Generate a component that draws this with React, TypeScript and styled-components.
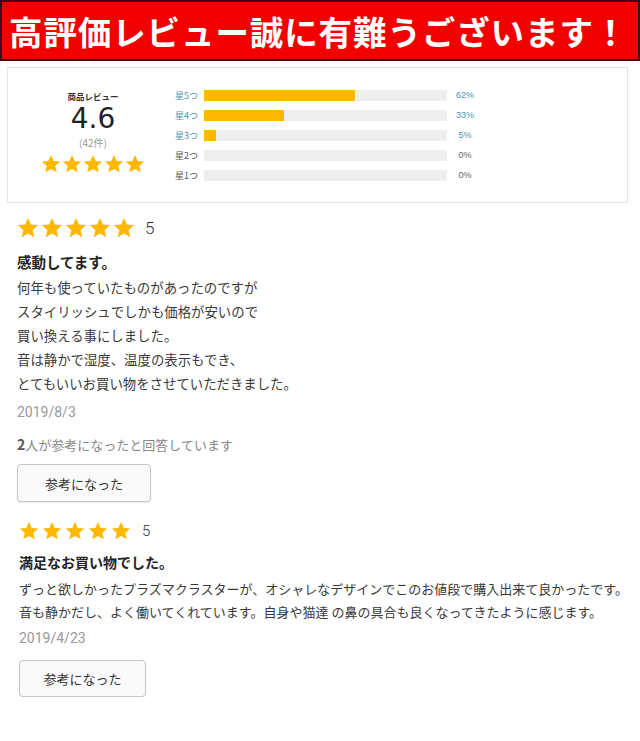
import React from "react";
import styled, { createGlobalStyle } from "styled-components";

const GlobalStyle = createGlobalStyle`
  html, body {
    margin: 0;
    padding: 0;
    background: #fff;
  }
  body {
    font-family: "Noto Sans CJK JP", "Noto Sans", sans-serif;
    color: #333;
  }
`;

const Page = styled.div`
  width: 640px;
`;

const Banner = styled.div`
  height: 57px;
  background: #f20000;
  border: 2px solid #3a0c0c;
  display: flex;
  align-items: center;
  padding-left: 7px;
  color: #fff;
  font-size: 33.5px;
  font-weight: 700;
  letter-spacing: 0.9px;
  white-space: nowrap;
  overflow: hidden;
`;

const Summary = styled.div`
  margin: 6px 12px 0 7px;
  border: 1px solid #e3e3e3;
  padding: 17px 0 17px 5px;
  display: flex;
  align-items: center;
  gap: 2px;
`;

const Overall = styled.div`
  width: 160px;
  margin-bottom: 6px;
  display: flex;
  flex-direction: column;
  align-items: center;
`;

const OverallLabel = styled.div`
  font-size: 8.5px;
  font-weight: 700;
  color: #333;
  line-height: 12px;
`;

const Score = styled.div`
  font-family: "DejaVu Sans", "Liberation Sans", sans-serif;
  font-size: 28px;
  line-height: 28px;
  color: #222;
  margin-top: 3px;
`;

const Count = styled.div`
  font-size: 10px;
  line-height: 12px;
  color: #999;
  margin-top: 4px;
`;

const OverallStars = styled.div`
  margin-top: 5px;
`;

const Bars = styled.div`
  display: flex;
  flex-direction: column;
`;

const BarRow = styled.div`
  height: 20px;
  display: flex;
  align-items: center;
  font-size: 9px;
`;

const BarLabel = styled.span<{ $active: boolean }>`
  width: 29px;
  color: ${(p) => (p.$active ? "#4a97ad" : "#555")};
`;

const Track = styled.div`
  width: 243px;
  height: 11px;
  background: #eee;
`;

const Fill = styled.div`
  height: 100%;
  background: #ffb800;
`;

const Percent = styled.span<{ $active: boolean }>`
  width: 28px;
  margin-left: 4px;
  text-align: center;
  font-family: "Liberation Sans", Arial, sans-serif;
  color: ${(p) => (p.$active ? "#4a97ad" : "#666")};
`;

const Review = styled.div<{ $compact?: boolean }>`
  padding-left: ${(p) => (p.$compact ? 19 : 17)}px;
  margin-top: ${(p) => (p.$compact ? 19 : 14)}px;
`;

const StarRow = styled.div<{ $size: number }>`
  display: flex;
  align-items: center;
  height: ${(p) => p.$size}px;
  gap: 2px;
`;

const StarValue = styled.span<{ $size: number }>`
  margin-left: 8px;
  font-family: "Roboto", "Liberation Sans", sans-serif;
  font-weight: 300;
  font-size: ${(p) => p.$size}px;
  color: #333;
`;

const ReviewTitle = styled.div<{ $compact?: boolean }>`
  font-weight: 700;
  color: #222;
  font-size: ${(p) => (p.$compact ? 14 : 14.5)}px;
  line-height: ${(p) => (p.$compact ? 20 : 22)}px;
  margin-top: ${(p) => (p.$compact ? 11 : 12)}px;
`;

const Body = styled.div<{ $compact?: boolean }>`
  font-size: ${(p) => (p.$compact ? 13 : 13.4)}px;
  line-height: ${(p) => (p.$compact ? 23 : 24)}px;
  margin-top: ${(p) => (p.$compact ? 4.5 : 2)}px;
  color: #3a3a3a;
  white-space: nowrap;
`;

const DateLine = styled.div<{ $compact?: boolean }>`
  font-family: "Roboto", "Liberation Sans", sans-serif;
  font-size: 14px;
  line-height: 20px;
  color: #999;
  margin-top: ${(p) => (p.$compact ? 5.5 : 7)}px;
`;

const Helpful = styled.div`
  font-size: 13px;
  line-height: 20px;
  color: #888;
  margin-top: 12px;
  b {
    color: #555;
    font-size: 14px;
  }
`;

const HelpButton = styled.button<{ $compact?: boolean }>`
  display: flex;
  align-items: center;
  justify-content: center;
  width: ${(p) => (p.$compact ? 127 : 134)}px;
  height: ${(p) => (p.$compact ? 37 : 38)}px;
  margin-top: ${(p) => (p.$compact ? 12 : 9)}px;
  background: #fafafa;
  border: 1px solid #c6c6c6;
  border-radius: 4px;
  box-shadow: 0 1px 2px rgba(0, 0, 0, 0.08);
  font-family: inherit;
  font-size: 13px;
  color: #333;
  padding: 0;
`;

const Star = ({ size }: { size: number }) => (
  <svg width={size} height={size} viewBox="0 0 24 24">
    <path
      d="M12 1.2l3.2 7.1 7.8.8-5.9 5.2 1.8 7.7L12 18l-6.9 4 1.8-7.7L1 9.1l7.8-.8z"
      fill="#ffb800"
    />
  </svg>
);

const Stars = ({ size, gap, value }: { size: number; gap?: number; value?: number }) => (
  <StarRow $size={size} style={gap !== undefined ? { gap } : undefined}>
    {[0, 1, 2, 3, 4].map((i) => (
      <Star key={i} size={size} />
    ))}
    {value !== undefined && <StarValue $size={size < 21 ? 15 : 17}>{value}</StarValue>}
  </StarRow>
);

const distribution = [
  { label: "星5つ", pct: 62 },
  { label: "星4つ", pct: 33 },
  { label: "星3つ", pct: 5 },
  { label: "星2つ", pct: 0 },
  { label: "星1つ", pct: 0 },
];

export default function App() {
  return (
    <Page>
      <GlobalStyle />
      <Banner>高評価レビュー誠に有難うございます！</Banner>

      <Summary>
        <Overall>
          <OverallLabel>商品レビュー</OverallLabel>
          <Score>4.6</Score>
          <Count>(42件)</Count>
          <OverallStars>
            <Stars size={20} gap={1} />
          </OverallStars>
        </Overall>
        <Bars>
          {distribution.map((d) => (
            <BarRow key={d.label}>
              <BarLabel $active={d.pct > 0}>{d.label}</BarLabel>
              <Track>
                <Fill style={{ width: `${d.pct}%` }} />
              </Track>
              <Percent $active={d.pct > 0}>{d.pct}%</Percent>
            </BarRow>
          ))}
        </Bars>
      </Summary>

      <Review>
        <Stars size={22} value={5} />
        <ReviewTitle>感動してます。</ReviewTitle>
        <Body>
          何年も使っていたものがあったのですが
          <br />
          スタイリッシュでしかも価格が安いので
          <br />
          買い換える事にしました。
          <br />
          音は静かで湿度、温度の表示もでき、
          <br />
          とてもいいお買い物をさせていただきました。
        </Body>
        <DateLine>2019/8/3</DateLine>
        <Helpful>
          <b>2</b>人が参考になったと回答しています
        </Helpful>
        <HelpButton>参考になった</HelpButton>
      </Review>

      <Review $compact>
        <Stars size={20} gap={3} value={5} />
        <ReviewTitle $compact>満足なお買い物でした。</ReviewTitle>
        <Body $compact>
          ずっと欲しかったプラズマクラスターが、オシャレなデザインでこのお値段で購入出来て良かったです。
          <br />
          音も静かだし、よく働いてくれています。自身や猫達 の鼻の具合も良くなってきたように感じます。
        </Body>
        <DateLine $compact>2019/4/23</DateLine>
        <HelpButton $compact>参考になった</HelpButton>
      </Review>
    </Page>
  );
}
